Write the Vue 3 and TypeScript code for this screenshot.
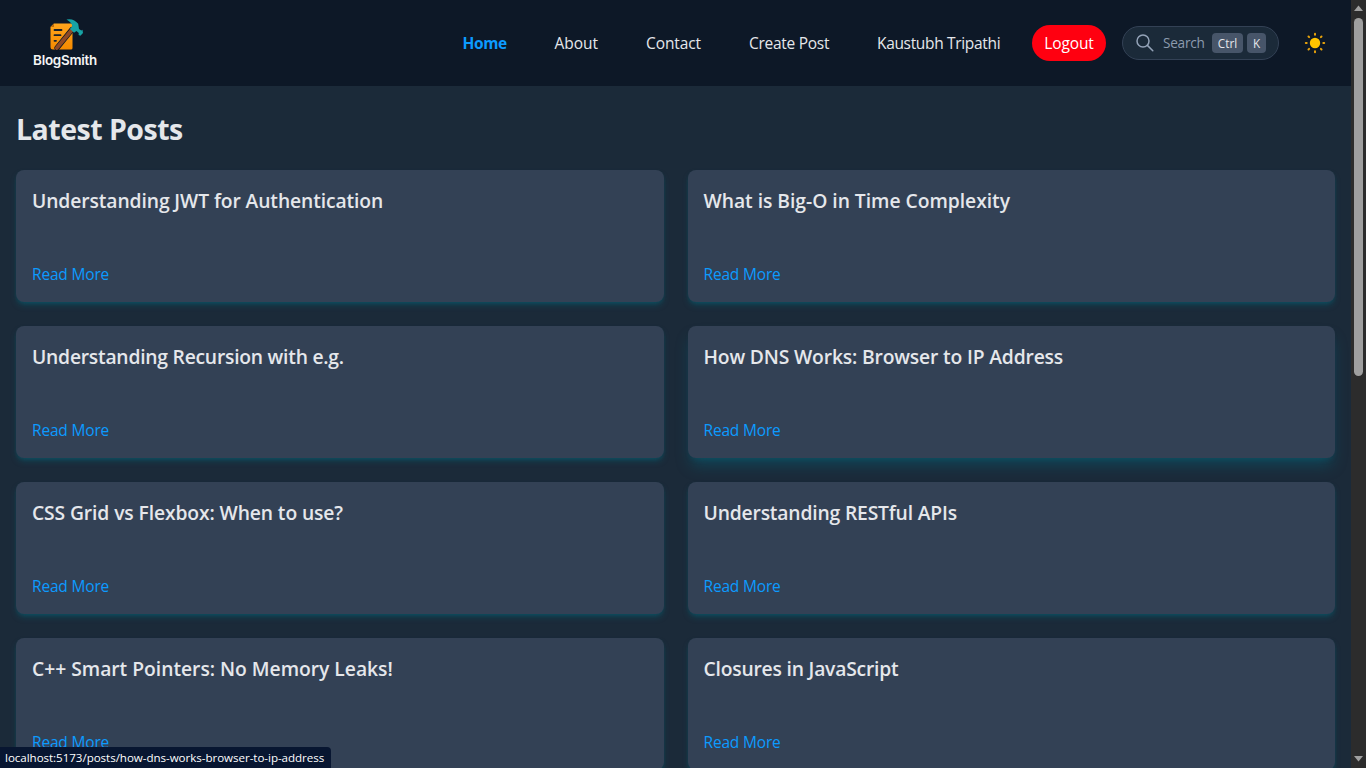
<script setup lang="ts">
interface Link { label: string; width: number; active?: boolean; spacing?: number }
interface Post { title: string; spacing: number; hovered?: boolean }

const links: Link[] = [
  { label: 'Home', width: 44, active: true, spacing: -0.4 },
  { label: 'About', width: 43.5, spacing: 0 },
  { label: 'Contact', width: 55, spacing: -0.1 },
  { label: 'Create Post', width: 80, spacing: -0.28 },
  { label: 'Kaustubh Tripathi', width: 123, spacing: -0.33 },
]

const posts: Post[] = [
  { title: 'Understanding JWT for Authentication', spacing: -0.1 },
  { title: 'What is Big-O in Time Complexity', spacing: -0.03 },
  { title: 'Understanding Recursion with e.g.', spacing: -0.23 },
  { title: 'How DNS Works: Browser to IP Address', spacing: -0.16, hovered: true },
  { title: 'CSS Grid vs Flexbox: When to use?', spacing: -0.11 },
  { title: 'Understanding RESTful APIs', spacing: -0.17 },
  { title: 'C++ Smart Pointers: No Memory Leaks!', spacing: -0.02 },
  { title: 'Closures in JavaScript', spacing: -0.2 },
]

const rays = [0, 45, 90, 135, 180, 225, 270, 315]
</script>

<template>
  <div class="window">
    <div class="page">
      <header class="navbar">
        <div class="logo">
          <svg class="mark" width="36" height="34" viewBox="0 0 36 34">
            <defs>
              <linearGradient id="paper" x1="0" y1="0" x2="0" y2="1">
                <stop offset="0" stop-color="#ffa51c" />
                <stop offset="1" stop-color="#f58a00" />
              </linearGradient>
            </defs>
            <path d="M4 5.5H21Q22.5 5.5 22.5 7V30Q22.5 31.5 21 31.5H3Q.5 31.5 .5 29V9Z" fill="url(#paper)" />
            <path d="M.5 9L4 5.5V9Z" fill="#bd6b0a" />
            <path d="M4.5 12H11.5M4.5 17.2H10.5M4.5 22.8H6" stroke="#17202b" stroke-width="1.8" stroke-linecap="round" />
            <path d="M7 30L22 11.5" stroke="#0d1826" stroke-width="5.2" stroke-linecap="round" />
            <path d="M6.8 30L22 11.8" stroke="#8f4a27" stroke-width="3.8" stroke-linecap="round" />
            <path d="M16.5 1.4Q24 0 28.2 5.8L29 11L31.4 12.5L32.5 11.8L33 15L30.4 17.8L28.6 17L28.8 15L26.4 13L24 14.8L20 11L22.4 8Q21.5 4.2 16.5 1.4Z" fill="#17a3a5" />
          </svg>
          <span class="brand">BlogSmith</span>
        </div>
        <nav class="links">
          <a
            v-for="link in links"
            :key="link.label"
            :class="['link', { active: link.active }]"
            :style="{ width: link.width + 'px', letterSpacing: link.spacing + 'px' }"
          >{{ link.label }}</a>
        </nav>
        <button class="logout">Logout</button>
        <div class="search">
          <svg width="18" height="18" viewBox="0 0 18 18" fill="none" stroke="#94a3b8" stroke-width="1.5" stroke-linecap="round">
            <circle cx="7" cy="7" r="6" />
            <path d="M11.4 11.4L16.8 16.8" />
          </svg>
          <span class="hint">Search</span>
          <kbd class="ctrl">Ctrl</kbd>
          <kbd class="key">K</kbd>
        </div>
        <svg class="sun" width="22" height="22" viewBox="-11 -11 22 22">
          <circle r="5.2" fill="#ffc400" />
          <path v-for="r in rays" :key="r" d="M8.3 0H9.2" :transform="`rotate(${r})`" stroke="#e9a30b" stroke-width="2" stroke-linecap="round" />
        </svg>
      </header>
      <main class="content">
        <h1>Latest Posts</h1>
        <section class="grid">
          <article v-for="post in posts" :key="post.title" :class="['card', { hovered: post.hovered }]">
            <h2 :style="{ letterSpacing: post.spacing + 'px' }">{{ post.title }}</h2>
            <a class="more">Read More</a>
          </article>
        </section>
      </main>
    </div>
    <div class="scrollbar">
      <svg width="15" height="18" viewBox="0 0 15 18"><path d="M3 11L7.5 5.5L12 11Z" fill="#a0a0a0" /></svg>
      <div class="thumb"></div>
      <svg class="down" width="15" height="18" viewBox="0 0 15 18"><path d="M3 6L7.5 11.5L12 6Z" fill="#a0a0a0" /></svg>
    </div>
    <div class="status">localhost:5173/posts/how-dns-works-browser-to-ip-address</div>
  </div>
</template>

<style>
body { background: #1b2838; overflow: hidden; }
</style>

<style scoped>
* { box-sizing: border-box; }
.window {
  position: relative;
  display: flex;
  width: 1366px;
  height: 768px;
  overflow: hidden;
  background: #1b2a39;
  color: #e5e7eb;
  font-family: "Segoe UI", "Open Sans", "Noto Sans", sans-serif;
}
.page { width: 1351px; height: 768px; overflow: hidden; }
.navbar {
  display: flex;
  align-items: center;
  height: 86px;
  background: #0d1827;
}
.logo {
  display: flex;
  flex-direction: column;
  align-items: center;
  width: 66px;
  margin-left: 32px;
}
.mark { display: block; margin-left: 6px; }
.brand {
  font-family: "Inter", "Roboto", sans-serif;
  font-size: 13.4px;
  font-weight: 600;
  line-height: 17px;
  letter-spacing: -0.25px;
  color: #f5f5f5;
  white-space: nowrap;
}
.links { display: flex; gap: 48px; margin-left: auto; }
.link {
  font-size: 15.5px;
  line-height: 24px;
  white-space: nowrap;
}
.link.active { color: #0c9bff; font-weight: 700; }
.logout {
  width: 74px;
  height: 36px;
  margin-left: 32px;
  padding: 0;
  border: 0;
  border-radius: 18px;
  background: #ff0010;
  color: #fff;
  font: 15.5px/36px "Segoe UI", "Open Sans", sans-serif;
  letter-spacing: -0.1px;
}
.search {
  display: flex;
  align-items: center;
  width: 157px;
  height: 34px;
  margin-left: 16px;
  padding-left: 13px;
  border: 1px solid #334155;
  border-radius: 17px;
  background: #1b2a39;
}
.hint {
  width: 49px;
  margin-left: 9px;
  font-size: 13.6px;
  line-height: 20px;
  letter-spacing: -0.25px;
  color: #8c9bae;
}
kbd {
  height: 20px;
  border-radius: 4px;
  background: #475569;
  color: #e5e7eb;
  font: 11.7px/20px "Segoe UI", "Open Sans", sans-serif;
  text-align: center;
}
.ctrl { width: 31px; }
.key { width: 19px; margin-left: 4px; }
.sun { margin: 0 25px; }
.content { padding: 25px 16px; }
h1 {
  margin: 0 0 23px;
  font-size: 28.5px;
  font-weight: 700;
  line-height: 36px;
  letter-spacing: -0.5px;
}
.grid {
  display: grid;
  grid-template-columns: 1fr 1fr;
  gap: 24px;
}
.card {
  display: flex;
  flex-direction: column;
  justify-content: space-between;
  height: 132px;
  padding: 16px;
  border-radius: 8px;
  background: #334155;
  box-shadow: 0 4px 6px -1px rgba(0, 109, 130, 0.4), 0 2px 4px -2px rgba(0, 109, 130, 0.4);
}
.card.hovered {
  box-shadow: 0 10px 15px -3px rgba(0, 109, 130, 0.42), 0 4px 6px -4px rgba(0, 109, 130, 0.42);
}
h2 {
  margin: 0;
  font-size: 19.3px;
  font-weight: 600;
  line-height: 30px;
  white-space: nowrap;
}
.more {
  font-size: 15.5px;
  line-height: 24px;
  letter-spacing: -0.18px;
  color: #0c9bff;
}
.scrollbar {
  display: flex;
  flex-direction: column;
  align-items: center;
  width: 15px;
  height: 768px;
  background: #2c2c2c;
}
.thumb { width: 9px; height: 358px; border-radius: 5px; background: #9f9f9f; }
.down { margin-top: auto; }
.status {
  position: absolute;
  left: 0;
  bottom: 0;
  width: 331px;
  height: 21px;
  padding-left: 5px;
  border-top-right-radius: 4px;
  background: #081631;
  color: #fff;
  font-size: 11.6px;
  line-height: 21px;
  letter-spacing: -0.05px;
  white-space: nowrap;
}
</style>
